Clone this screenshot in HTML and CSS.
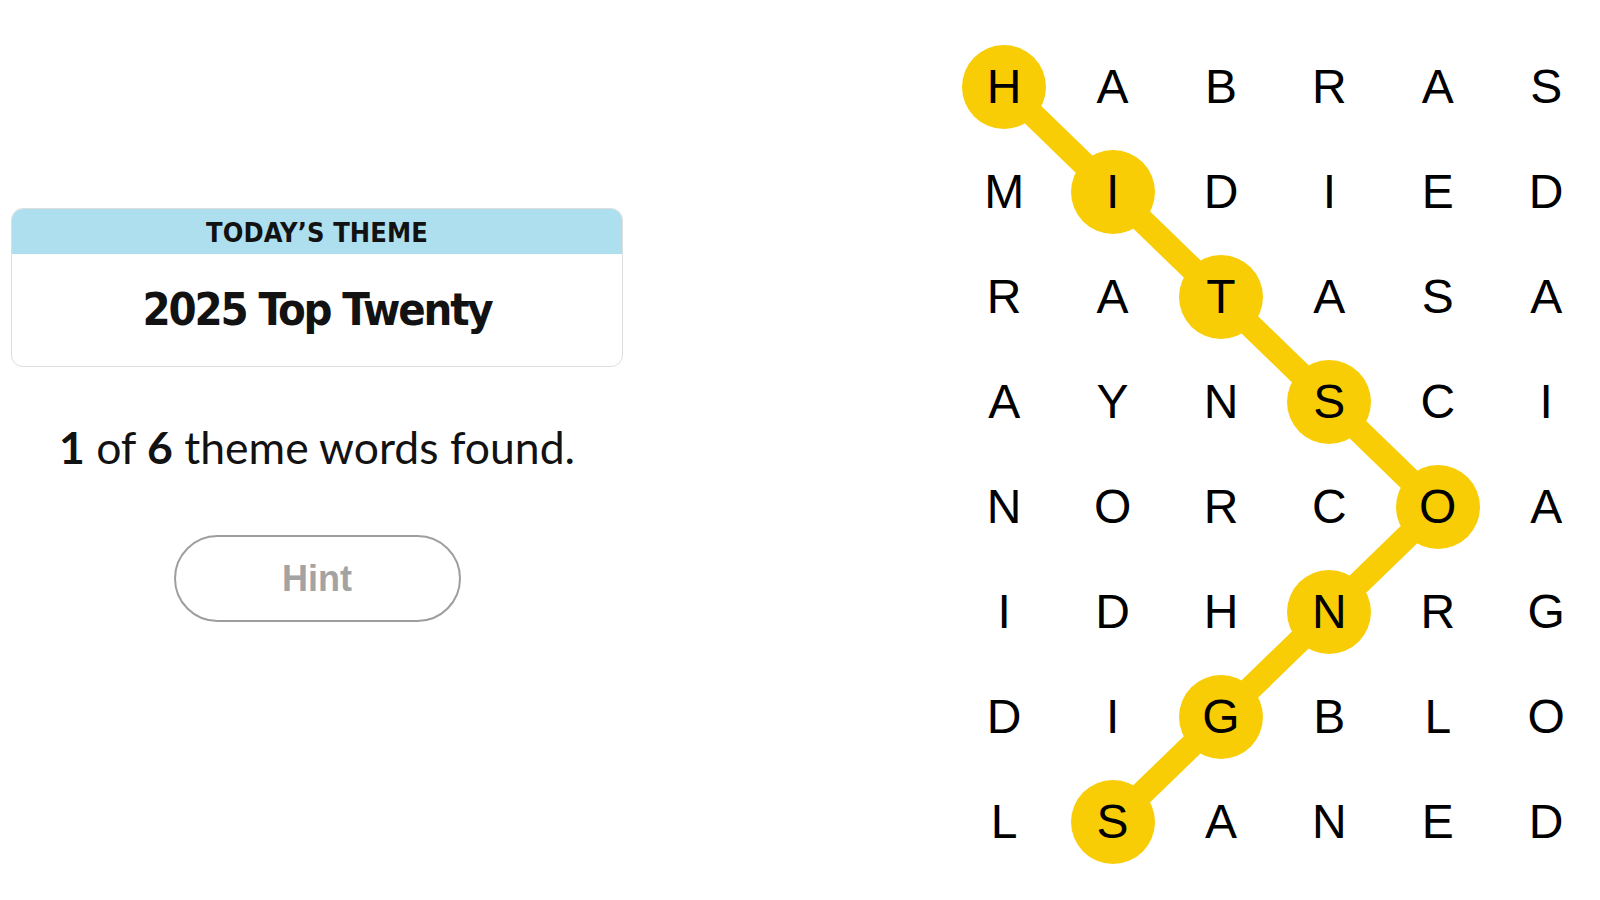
FILE: index.html
```html
<!DOCTYPE html>
<html lang="en">
<head>
<meta charset="utf-8">
<title>Strands</title>
<link rel="stylesheet" href="styles.css">
</head>
<body>
<main class="page">
  <section class="side">
    <div class="theme-card">
      <div class="theme-head">TODAY’S THEME</div>
      <div class="theme-body">2025 Top Twenty</div>
    </div>
    <p class="progress"><b>1</b> of <b>6</b> theme words found.</p>
    <button class="hint" type="button">Hint</button>
  </section>
  <section class="board">
    <svg class="path" viewBox="0 0 650 841" aria-hidden="true">
      <polyline points="54,52.5 162.4,157.6 270.8,262.7 379.2,367.8 487.6,472.9 379.2,578 270.8,683.1 162.4,788.2" />
    </svg>
    <div class="grid">
      <span class="cell"><span class="ltr on">H</span></span>
      <span class="cell"><span class="ltr">A</span></span>
      <span class="cell"><span class="ltr">B</span></span>
      <span class="cell"><span class="ltr">R</span></span>
      <span class="cell"><span class="ltr">A</span></span>
      <span class="cell"><span class="ltr">S</span></span>

      <span class="cell"><span class="ltr">M</span></span>
      <span class="cell"><span class="ltr on">I</span></span>
      <span class="cell"><span class="ltr">D</span></span>
      <span class="cell"><span class="ltr">I</span></span>
      <span class="cell"><span class="ltr">E</span></span>
      <span class="cell"><span class="ltr">D</span></span>

      <span class="cell"><span class="ltr">R</span></span>
      <span class="cell"><span class="ltr">A</span></span>
      <span class="cell"><span class="ltr on">T</span></span>
      <span class="cell"><span class="ltr">A</span></span>
      <span class="cell"><span class="ltr">S</span></span>
      <span class="cell"><span class="ltr">A</span></span>

      <span class="cell"><span class="ltr">A</span></span>
      <span class="cell"><span class="ltr">Y</span></span>
      <span class="cell"><span class="ltr">N</span></span>
      <span class="cell"><span class="ltr on">S</span></span>
      <span class="cell"><span class="ltr">C</span></span>
      <span class="cell"><span class="ltr">I</span></span>

      <span class="cell"><span class="ltr">N</span></span>
      <span class="cell"><span class="ltr">O</span></span>
      <span class="cell"><span class="ltr">R</span></span>
      <span class="cell"><span class="ltr">C</span></span>
      <span class="cell"><span class="ltr on">O</span></span>
      <span class="cell"><span class="ltr">A</span></span>

      <span class="cell"><span class="ltr">I</span></span>
      <span class="cell"><span class="ltr">D</span></span>
      <span class="cell"><span class="ltr">H</span></span>
      <span class="cell"><span class="ltr on">N</span></span>
      <span class="cell"><span class="ltr">R</span></span>
      <span class="cell"><span class="ltr">G</span></span>

      <span class="cell"><span class="ltr">D</span></span>
      <span class="cell"><span class="ltr">I</span></span>
      <span class="cell"><span class="ltr on">G</span></span>
      <span class="cell"><span class="ltr">B</span></span>
      <span class="cell"><span class="ltr">L</span></span>
      <span class="cell"><span class="ltr">O</span></span>

      <span class="cell"><span class="ltr">L</span></span>
      <span class="cell"><span class="ltr on">S</span></span>
      <span class="cell"><span class="ltr">A</span></span>
      <span class="cell"><span class="ltr">N</span></span>
      <span class="cell"><span class="ltr">E</span></span>
      <span class="cell"><span class="ltr">D</span></span>
    </div>
  </section>
</main>
</body>
</html>
```
FILE: styles.css
```css
* { box-sizing: border-box; }
html, body {
  margin: 0;
  padding: 0;
  background: #ffffff;
  color: #121212;
}
body {
  width: 1600px;
  height: 900px;
  overflow: hidden;
  font-family: "Liberation Sans", Arial, sans-serif;
}
.page {
  display: flex;
  justify-content: space-between;
  align-items: flex-start;
  height: 900px;
}
.side {
  width: 612px;
  margin-left: 11px;
  padding-top: 208px;
  display: flex;
  flex-direction: column;
  align-items: center;
}
.theme-card {
  width: 612px;
  border: 1px solid #dedede;
  border-radius: 12px;
  overflow: hidden;
  background: #fff;
}
.theme-head {
  height: 45px;
  background: #aedfee;
  display: flex;
  align-items: center;
  justify-content: center;
  font-family: "DejaVu Sans Condensed", "Liberation Sans Narrow", sans-serif;
  font-weight: 700;
  font-size: 27px;
  letter-spacing: 0.1px;
  color: #121212;
  padding-top: 1px;
}
.theme-body {
  height: 112px;
  display: flex;
  align-items: center;
  justify-content: center;
  font-family: "DejaVu Sans Condensed", "Liberation Sans Narrow", sans-serif;
  font-weight: 700;
  font-size: 45px;
  letter-spacing: -2.15px;
  color: #121212;
  padding-bottom: 2px;
}
.progress {
  margin: 55px 0 0 0;
  font-family: Lato, "Liberation Sans", sans-serif;
  font-size: 44.5px;
  line-height: 50px;
  color: #121212;
  text-align: center;
}
.progress b { font-weight: 700; }
.hint {
  margin-top: 63px;
  width: 287px;
  height: 87px;
  border: 2px solid #9e9e9e;
  border-radius: 44px;
  background: #fff;
  color: #a3a3a3;
  font-family: "Liberation Sans", Arial, sans-serif;
  font-weight: 700;
  font-size: 36px;
  padding: 0;
}
.board {
  position: relative;
  width: 650px;
  height: 841px;
  margin-top: 34px;
}
.path {
  position: absolute;
  left: 0;
  top: 0;
  width: 650px;
  height: 841px;
  z-index: 0;
}
.path polyline {
  fill: none;
  stroke: #f8cd05;
  stroke-width: 24;
  stroke-linecap: round;
  stroke-linejoin: round;
}
.grid {
  position: relative;
  z-index: 1;
  display: grid;
  grid-template-columns: repeat(6, 108.4px);
  grid-template-rows: repeat(8, 105.1px);
}
.cell {
  display: flex;
  align-items: center;
  justify-content: center;
}
.ltr {
  width: 84px;
  height: 84px;
  border-radius: 50%;
  display: flex;
  align-items: center;
  justify-content: center;
  font-family: "Liberation Sans", Arial, sans-serif;
  font-size: 48px;
  font-weight: 400;
  color: #000;
  line-height: 1;
}
.ltr.on { background: #f8cd05; }
```
